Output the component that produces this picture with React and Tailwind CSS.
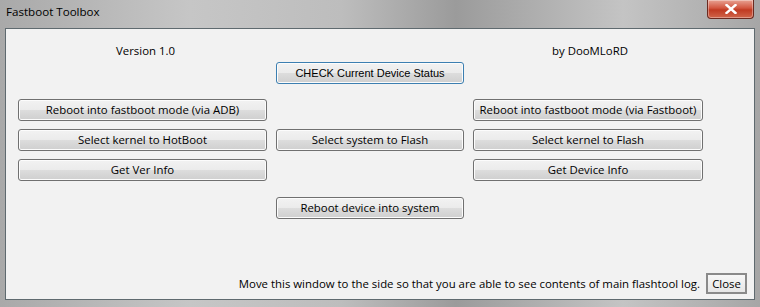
const font = { fontFamily: '"Open Sans", "Noto Sans", sans-serif' };

function WinButton({ children, className = '', focused = false }) {
  return (
    <button
      className={`h-[22px] whitespace-nowrap rounded-[3px] border ${focused ? 'border-[#3c7fb1]' : 'border-[#707070]'} bg-[linear-gradient(to_bottom,#f2f2f2_0%,#ebebeb_50%,#dddddd_50%,#cfcfcf_100%)] p-0 text-[11.4px] text-black shadow-[inset_0_0_0_1px_#fcfcfc] ${className}`}
    >
      {children}
    </button>
  );
}

export default function App() {
  return (
    <div
      className="flex h-[307px] w-[760px] flex-col bg-[linear-gradient(to_right,#a9a9a9,#c6c6c6_25%,#bdbdbd_45%,#9b9b9b_60%,#c4c4c4_82%,#a6a6a6)]"
      style={font}
    >
      <div className="flex h-[28px] items-start justify-between">
        <span className="pl-[6px] pt-[5px] text-[11.6px] leading-[14px] text-black">Fastboot Toolbox</span>
        <div className="mr-[6px] flex h-[19px] w-[47px] items-center justify-center rounded-b-[4px] border border-t-0 border-[#6b2a20] bg-[linear-gradient(to_bottom,#e8a293,#d2553f_45%,#c03a22_55%,#d0654a)] shadow-[inset_0_0_0_1px_rgba(255,255,255,0.35)]">
          <svg width="12" height="10" viewBox="0 0 12 10">
            <path d="M1.5 1 L10.5 9 M10.5 1 L1.5 9" stroke="#ffffff" strokeWidth="2.4" strokeLinecap="square" />
          </svg>
        </div>
      </div>

      <div className="mx-[5px] mb-[7px] flex flex-1 flex-col border border-[#5f6a6f] bg-[#f2f2f2] text-[11.4px] text-black">
        <div className="grid grid-cols-[249px_188px_230px] gap-x-[9px] pl-[12px] pt-[15px]">
          <span className="pl-[98px] leading-[14px]">Version 1.0</span>
          <span />
          <span className="pl-[79px] leading-[14px]">by DooMLoRD</span>

          <span />
          <WinButton focused className="mt-[4px] h-[20px]">
            <span className="text-[11px]" style={{ fontFamily: '"Liberation Sans", Arial, sans-serif' }}>
              CHECK Current Device Status
            </span>
          </WinButton>
          <span />

          <WinButton className="mt-[15px]">Reboot into fastboot mode (via ADB)</WinButton>
          <span />
          <WinButton className="mt-[15px]">Reboot into fastboot mode (via Fastboot)</WinButton>

          <WinButton className="mt-[8px]">Select kernel to HotBoot</WinButton>
          <WinButton className="mt-[8px]">Select system to Flash</WinButton>
          <WinButton className="mt-[8px]">Select kernel to Flash</WinButton>

          <WinButton className="mt-[8px]">Get Ver Info</WinButton>
          <span />
          <WinButton className="mt-[8px]">Get Device Info</WinButton>

          <span />
          <WinButton className="mt-[16px]">Reboot device into system</WinButton>
          <span />
        </div>

        <div className="mt-auto mb-[5px] flex items-center justify-end gap-[6px] pr-[7px]">
          <span className="whitespace-nowrap leading-[14px]">
            Move this window to the side so that you are able to see contents of main flashtool log.
          </span>
          <button className="h-[21px] w-[41px] border-[2px] border-[#8a8a8a] bg-[linear-gradient(to_bottom,#f7f7f7,#e6e6e6)] p-0 text-[11.4px] text-black">
            Close
          </button>
        </div>
      </div>
    </div>
  );
}
